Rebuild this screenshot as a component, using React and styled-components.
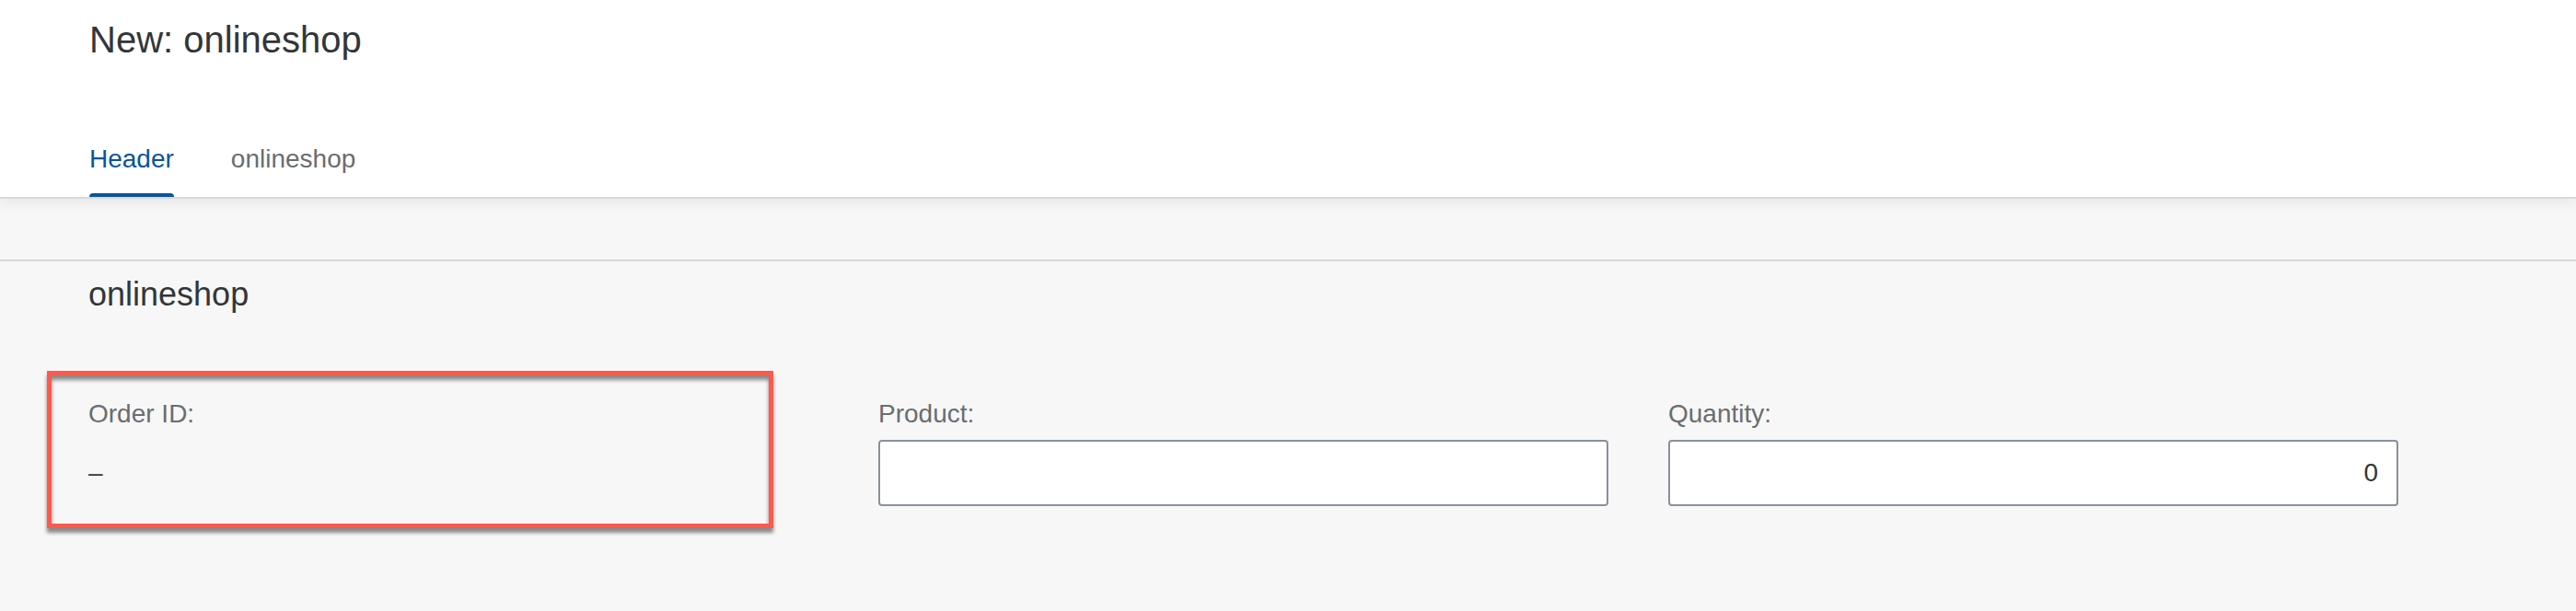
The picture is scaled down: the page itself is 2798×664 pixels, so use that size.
import React from "react";
import styled, { createGlobalStyle } from "styled-components";

const GlobalStyle = createGlobalStyle`
  html, body {
    margin: 0;
    padding: 0;
    background: #f7f7f7;
    font-family: "Liberation Sans", Arial, sans-serif;
  }
  * { box-sizing: border-box; }
`;

const Page = styled.div`
  width: 100%;
  min-height: 664px;
  background: #f7f7f7;
`;

const Header = styled.header`
  background: #ffffff;
  height: 216px;
  padding: 19px 0 0 97px;
  border-bottom: 2px solid #d9d9d9;
  box-shadow: 0 4px 14px rgba(0, 0, 0, 0.07);
  position: relative;
  z-index: 1;
`;

const Title = styled.h1`
  margin: 0;
  font-size: 40px;
  line-height: 48px;
  font-weight: 400;
  color: #32363a;
`;

const TabBar = styled.nav`
  display: flex;
  gap: 48px;
  margin-top: 86px;
  margin-left: -7px;
`;

const TabItem = styled.div`
  display: flex;
  flex-direction: column;
  justify-content: space-between;
  height: 61px;
  padding: 0 7px;
  cursor: pointer;
`;

const TabLabel = styled.span`
  font-size: 28px;
  line-height: 40px;
  color: ${(p) => (p.$active ? "#0854a0" : "#6a6d70")};
`;

const TabIndicator = styled.span`
  display: block;
  height: 4px;
  border-radius: 4px 4px 0 0;
  background: ${(p) => (p.$active ? "#0854a0" : "transparent")};
`;

const Divider = styled.div`
  margin-top: 66px;
  height: 2px;
  background: #d9d9d9;
`;

const Section = styled.section`
  padding: 14px 0 0 96px;
`;

const SectionTitle = styled.h2`
  margin: 0;
  font-size: 36px;
  line-height: 44px;
  font-weight: 400;
  color: #32363a;
`;

const FormGrid = styled.div`
  display: grid;
  grid-template-columns: repeat(3, 793px);
  column-gap: 65px;
  margin-top: 88px;
`;

const Field = styled.div`
  display: flex;
  flex-direction: column;
  gap: 8px;
  position: relative;
`;

const Label = styled.label`
  font-size: 28px;
  line-height: 40px;
  color: #6a6d70;
`;

const Value = styled.div`
  height: 72px;
  line-height: 72px;
  font-size: 28px;
  color: #32363a;
`;

const Input = styled.input`
  height: 72px;
  width: 100%;
  border: 2px solid #89919a;
  border-radius: 4px;
  background: #ffffff;
  padding: 0 20px;
  font-family: "Liberation Sans", Arial, sans-serif;
  font-size: 28px;
  color: #32363a;
  text-align: ${(p) => (p.$numeric ? "right" : "left")};
  outline: none;
`;

const Highlight = styled.div`
  position: absolute;
  top: -27px;
  left: -45px;
  width: 789px;
  height: 171px;
  border: 5px solid #fb5a4c;
  box-shadow: 0 5px 4px rgba(0, 0, 0, 0.45), inset 0 5px 4px rgba(0, 0, 0, 0.45);
  pointer-events: none;
`;

const tabs = [
  { label: "Header", active: true },
  { label: "onlineshop", active: false },
];

export default function App() {
  return (
    <Page>
      <GlobalStyle />
      <Header>
        <Title>New: onlineshop</Title>
        <TabBar>
          {tabs.map((t) => (
            <TabItem key={t.label}>
              <TabLabel $active={t.active}>{t.label}</TabLabel>
              <TabIndicator $active={t.active} />
            </TabItem>
          ))}
        </TabBar>
      </Header>
      <Divider />
      <Section>
        <SectionTitle>onlineshop</SectionTitle>
        <FormGrid>
          <Field>
            <Label>Order ID:</Label>
            <Value>–</Value>
            <Highlight />
          </Field>
          <Field>
            <Label>Product:</Label>
            <Input readOnly value="" />
          </Field>
          <Field>
            <Label>Quantity:</Label>
            <Input $numeric readOnly value="0" />
          </Field>
        </FormGrid>
      </Section>
    </Page>
  );
}
